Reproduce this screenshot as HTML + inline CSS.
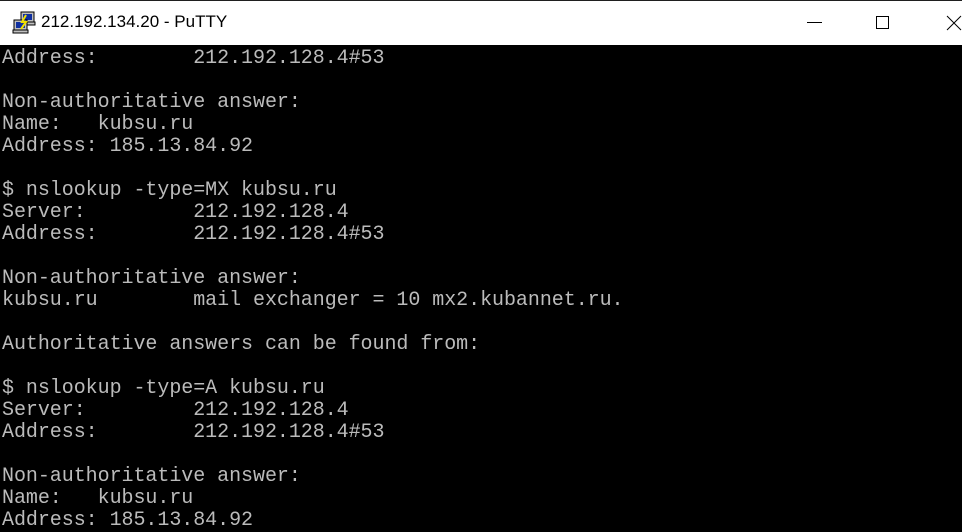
<!DOCTYPE html>
<html><head><meta charset="utf-8"><style>
html,body{margin:0;padding:0;width:962px;height:530px;overflow:hidden;background:#000}
.tb{position:absolute;left:0;top:0;width:962px;height:45px;background:#fff;border-top:1px solid #1f1f1f;box-sizing:border-box}
.title{position:absolute;left:41px;top:11px;font:17px "Liberation Sans",sans-serif;color:#000}
pre{position:absolute;left:2px;top:48px;margin:0;font:20px/22px "Liberation Mono",monospace;color:#bbbbbb;letter-spacing:-0.05px}
</style></head><body>
<div class="tb">
<svg style="position:absolute;left:11px;top:10px" width="26" height="24" viewBox="0 0 26 24">
<rect x="10" y="1" width="13" height="10" fill="#c0c0c0" stroke="#000"/><rect x="12" y="3" width="9" height="6" fill="#1030a0"/>
<rect x="9" y="11" width="15" height="3" fill="#c0c0c0" stroke="#000"/>
<rect x="3" y="9" width="13" height="10" fill="#c0c0c0" stroke="#000"/><rect x="5" y="11" width="9" height="6" fill="#1030a0"/>
<rect x="2" y="19" width="15" height="3" fill="#c0c0c0" stroke="#000"/>
<path d="M15 4 L11 11 L15 11 L10 18" stroke="#f0e000" stroke-width="2" fill="none"/>
</svg>
<div class="title">212.192.134.20 - PuTTY</div>
<div style="position:absolute;left:807px;top:21px;width:15px;height:1px;background:#000"></div>
<div style="position:absolute;left:876px;top:15px;width:13px;height:13px;border:1px solid #000;box-sizing:border-box"></div>
<svg style="position:absolute;left:946px;top:14px" width="16" height="16"><path d="M1 1L15 15M15 1L1 15" stroke="#000" stroke-width="1"/></svg>
</div>
<pre>Address:        212.192.128.4#53

Non-authoritative answer:
Name:   kubsu.ru
Address: 185.13.84.92

$ nslookup -type=MX kubsu.ru
Server:         212.192.128.4
Address:        212.192.128.4#53

Non-authoritative answer:
kubsu.ru        mail exchanger = 10 mx2.kubannet.ru.

Authoritative answers can be found from:

$ nslookup -type=A kubsu.ru
Server:         212.192.128.4
Address:        212.192.128.4#53

Non-authoritative answer:
Name:   kubsu.ru
Address: 185.13.84.92</pre>
</body></html>
